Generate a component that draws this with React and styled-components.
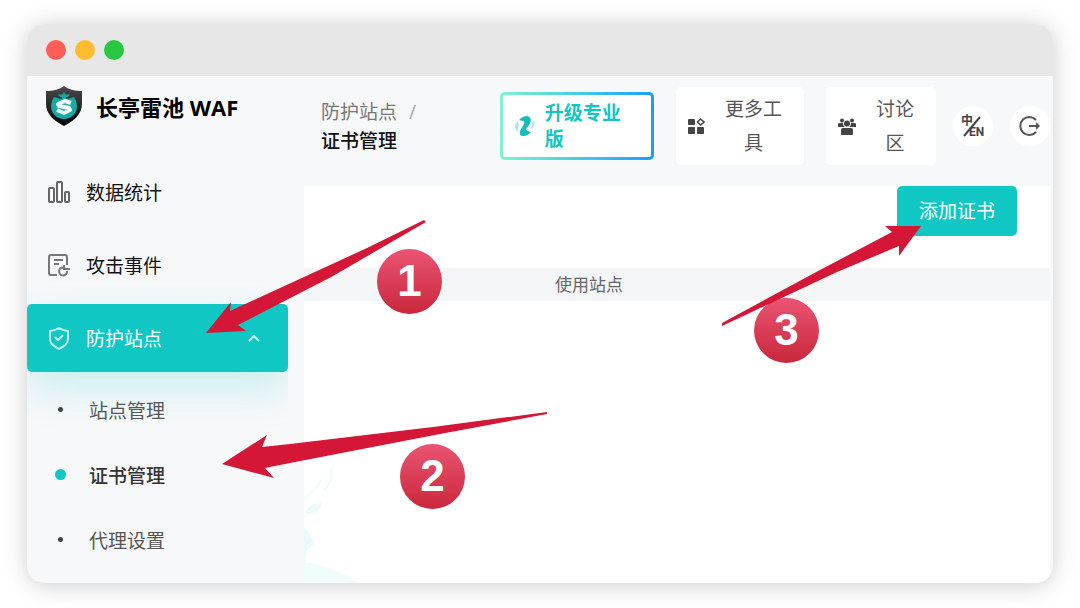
import React from "react";
import styled, { createGlobalStyle } from "styled-components";

const GlobalStyle = createGlobalStyle`
  * {
    box-sizing: border-box;
  }
  body {
    margin: 0;
    background-color: #fff;
    font-family: "Noto Sans", "Noto Sans CJK SC", sans-serif;
    font-size: 19px;
  }
  button {
    font: inherit;
    border: 0;
    cursor: pointer;
  }
`;

const Page = styled.div`
  position: relative;
  display: flex;
  min-height: 100vh;
  padding: 24px 27px 25px;
  overflow: hidden;
`;

const Window = styled.div`
  flex: 1;
  display: flex;
  flex-direction: column;
  border-radius: 18px;
  overflow: hidden;
  background-color: #f7f8fa;
  box-shadow: 0 2px 24px rgb(0, 0, 0, 0.2);
`;

const TitleBar = styled.div`
  display: flex;
  align-items: center;
  gap: 9px;
  height: 52px;
  padding-left: 19px;
  background-color: #e7e7e7;
`;

const Light = styled.span`
  width: 20px;
  height: 20px;
  border-radius: 50%;
  background-color: ${(props) => props.$color};
`;

const Body = styled.div`
  flex: 1;
  display: flex;
  gap: 16px;
`;

const Sidebar = styled.nav`
  flex: none;
  width: 261px;
  overflow: hidden;
`;

const Logo = styled.h1`
  display: flex;
  align-items: center;
  gap: 13px;
  height: 60px;
  margin: 0 0 22px;
  padding-left: 18px;
  color: #000;
  font-family: "Open Sans", "Noto Sans CJK SC", sans-serif;
  font-size: 22px;
  font-weight: 700;
`;

const MenuList = styled.ul`
  display: flex;
  flex-direction: column;
  gap: 5px;
  margin: 0;
  padding: 0;
  list-style: none;
`;

const MenuButton = styled.button`
  display: flex;
  align-items: center;
  gap: 15px;
  width: 100%;
  height: 68px;
  padding: 0 28px 0 20px;
  border-radius: 5px;
  color: ${(props) => (props.$active ? "#fff" : "#111")};
  background-color: ${(props) => (props.$active ? "#11c7c4" : "transparent")};
  box-shadow: ${(props) =>
    props.$active ? "0 16px 40px rgb(15, 198, 194, 0.2)" : "none"};
`;

const MenuLabel = styled.span`
  flex: 1;
  text-align: left;
`;

const SubLink = styled.a`
  display: flex;
  align-items: center;
  gap: ${(props) => (props.$active ? 23 : 26)}px;
  height: 65px;
  padding-left: ${(props) => (props.$active ? 28 : 31)}px;
  color: ${(props) => (props.$active ? "#333" : "#555")};
  font-weight: ${(props) => (props.$active ? 500 : 400)};
  text-decoration: none;

  &::before {
    content: "";
    width: ${(props) => (props.$active ? 11 : 5)}px;
    height: ${(props) => (props.$active ? 11 : 5)}px;
    border-radius: 50%;
    background-color: ${(props) => (props.$active ? "#11c7c4" : "#444")};
  }
`;

const Main = styled.main`
  flex: 1;
  display: flex;
  flex-direction: column;
  min-width: 0;
  padding-right: 3px;
`;

const Header = styled.header`
  display: flex;
  align-items: center;
  justify-content: space-between;
  height: 110px;
  padding-left: 17px;
`;

const Breadcrumb = styled.div`
  width: 110px;
  margin-top: -8px;
  color: #777;
  line-height: 29px;

  b {
    display: block;
    color: #111;
    font-weight: 500;
  }
  span {
    margin-left: 12px;
    color: #aaa;
  }
`;

const Actions = styled.div`
  display: flex;
  align-items: center;
  gap: 17px;
  margin-top: -10px;
`;

const UpgradeButton = styled.button`
  display: flex;
  align-items: center;
  gap: 10px;
  width: 154px;
  height: 68px;
  margin-right: 5px;
  padding: 0 12px;
  border: 3px solid transparent;
  border-radius: 5px;
  color: #11c7c4;
  background: linear-gradient(#fff, #fff) padding-box,
    linear-gradient(90deg, #7df5cd, #1a9dff) border-box;
  font-weight: 700;
  line-height: 26px;
  text-align: left;
`;

const ToolButton = styled.button`
  display: flex;
  align-items: center;
  gap: 18px;
  width: ${(props) => props.$width}px;
  height: 78px;
  margin-right: ${(props) => props.$gap}px;
  padding: 0 20px 0 12px;
  border-radius: 5px;
  color: #555;
  background-color: #fff;
  line-height: 34px;

  span {
    flex: 1;
  }
`;

const RoundButton = styled.button`
  display: flex;
  align-items: center;
  justify-content: center;
  width: 40px;
  height: 40px;
  padding: 0;
  border-radius: 50%;
  color: #444;
  background-color: #fff;
`;

const Card = styled.section`
  position: relative;
  flex: 1;
  display: flex;
  flex-direction: column;
  background-color: #fff;
`;

const AddButton = styled.button`
  align-self: flex-end;
  width: 120px;
  height: 50px;
  margin: 0 33px 32px 0;
  padding: 0 0 3px;
  border-radius: 5px;
  color: #fff;
  background-color: #11c7c4;
`;

const Table = styled.table`
  width: 100%;
  border-collapse: collapse;
  table-layout: fixed;

  th {
    height: 33px;
    padding: 0;
    color: #666;
    background-color: #f4f5f7;
    font-size: 17px;
    font-weight: 400;
    line-height: 24px;
    text-align: left;
  }
  th:first-child {
    width: 251px;
  }
`;

const Backdrop = styled.svg`
  position: absolute;
  left: 0;
  bottom: 0;
`;

const Arrows = styled.svg`
  position: absolute;
  top: 0;
  left: 0;
  pointer-events: none;
`;

const Step = styled.span`
  position: absolute;
  top: ${(props) => props.$top}px;
  left: ${(props) => props.$left}px;
  width: 65px;
  height: 65px;
  border-radius: 50%;
  color: #fff;
  background-image: linear-gradient(#ea5473, #c9283b);
  font-family: "Liberation Sans", sans-serif;
  font-size: 44px;
  font-weight: 700;
  line-height: 63px;
  text-align: center;
`;

const ShieldLogo = () => (
  <svg width="38" height="40" viewBox="0 0 38 40">
    <defs>
      <linearGradient id="shield" x1="0" y1="0" x2="0" y2="1">
        <stop offset="0" stopColor="#4a4a4a" />
        <stop offset="1" stopColor="#050505" />
      </linearGradient>
    </defs>
    <path
      fill="url(#shield)"
      d="M19 0C14 4 7 5 1 5v13c0 10 8 17 18 22 10-5 18-12 18-22V5C31 5 24 4 19 0z"
    />
    <path
      fill="#17a9a4"
      d="M9 11q5 2 10 2t10-2q3 4 3 9a13 13 0 0 1-26 0q0-5 3-9z"
    />
    <path
      fill="#17a9a4"
      d="M13 8l4 1 2-3 2 3 4-1-2 3h-2v3h-4v-3h-2z"
    />
    <path
      fill="none"
      stroke="#eefafa"
      strokeWidth="4"
      strokeLinejoin="round"
      d="M26 17l-6-2-7 3 1 2 10 2 1 2-6 3-7-3"
    />
  </svg>
);

const ChartIcon = () => (
  <svg width="24" height="24" fill="none" stroke="#666" strokeWidth="2">
    <rect x="2" y="8" width="5" height="14" rx="1" />
    <rect x="10" y="2" width="5" height="20" rx="1" />
    <rect x="18" y="12" width="4" height="10" rx="1" />
  </svg>
);

const EventIcon = () => (
  <svg width="24" height="24" fill="none" stroke="#777" strokeWidth="2">
    <path d="M10 22H4a2 2 0 0 1-2-2V4a2 2 0 0 1 2-2h14a2 2 0 0 1 2 2v8M7 7h9M7 11h5" />
    <path d="M18 15a4 4 0 1 0 2 3M17 12v4h6" />
  </svg>
);

const ShieldIcon = () => (
  <svg
    width="24"
    height="24"
    fill="none"
    stroke="#c5f3f2"
    strokeWidth="2"
    strokeLinejoin="round"
  >
    <path d="M12 2C9 4 6 5 3 5v8c0 5 4 7 9 10 5-3 9-5 9-10V5c-3 0-6-1-9-3z" />
    <path d="M8 11l3 3 5-5" />
  </svg>
);

const CaretIcon = () => (
  <svg width="12" height="8" fill="none" stroke="#c5f3f2" strokeWidth="2">
    <path d="M1 7l5-5 5 5" />
  </svg>
);

const UpgradeIcon = () => (
  <svg width="20" height="22" viewBox="0 0 20 22">
    <path
      d="M4 5q4-4 8-4 4 1 4 4 0 3-4 8-2 2 1 3l3 1q-4 5-9 4-3-1-2-5l4-7q1-3-1-3z"
      fill="#18bcbd"
    />
    <path d="M3 6Q0 8 0 13q1 3 4 4-2-4 0-6zM17 7l2-1q2 6-4 9 3-4 2-8z" fill="#a5e8e7" />
  </svg>
);

const AppsIcon = () => (
  <svg width="17" height="16" fill="#444">
    <rect x="0" y="1" width="7" height="6" rx="1" />
    <rect x="0" y="9" width="7" height="7" rx="1" />
    <rect x="9" y="9" width="7" height="7" rx="1" />
    <path
      d="M12.5 1L16 4l-3.500 3-3-3z"
      fill="none"
      stroke="#444"
      strokeWidth="1.5"
    />
  </svg>
);

const PeopleIcon = () => (
  <svg width="18" height="17" fill="#444">
    <circle cx="4" cy="2.5" r="2" />
    <circle cx="14" cy="2.5" r="2" />
    <circle cx="9" cy="5.5" r="3" />
    <path d="M0 9V6q0-1 2-1h3q0 3 2 4zM18 9V6q0-1-2-1h-3q0 3-2 4zM3 16v-4q0-2 2-2h8q2 0 2 2v4q0 1-1 1H4q-1 0-1-1z" />
  </svg>
);

const LanguageIcon = () => (
  <svg
    width="24"
    height="24"
    fill="#444"
    fontFamily="Roboto, 'Noto Sans CJK SC', sans-serif"
    fontWeight="700"
  >
    <text x="0" y="11" fontSize="12">
      中
    </text>
    <path d="M19 3L3 22" stroke="#444" strokeWidth="2" />
    <text x="8" y="22" fontSize="12">
      EN
    </text>
  </svg>
);

const ExitIcon = () => (
  <svg width="22" height="22" fill="none" stroke="#555" strokeWidth="2">
    <path d="M17 5a9 9 0 1 0 0 12M10 11h9" />
    <path d="M17 7l4 4-4 4z" fill="#555" stroke="none" />
  </svg>
);

const App = () => {
  return (
    <Page>
      <GlobalStyle />
      <Window>
        <TitleBar>
          <Light $color="#ff5f57" />
          <Light $color="#febc2e" />
          <Light $color="#28c840" />
        </TitleBar>
        <Body>
          <Sidebar>
            <Logo>
              <ShieldLogo />
              长亭雷池 WAF
            </Logo>
            <MenuList>
              <li>
                <MenuButton>
                  <ChartIcon />
                  <MenuLabel>数据统计</MenuLabel>
                </MenuButton>
              </li>
              <li>
                <MenuButton>
                  <EventIcon />
                  <MenuLabel>攻击事件</MenuLabel>
                </MenuButton>
              </li>
              <li>
                <MenuButton $active aria-expanded="true">
                  <ShieldIcon />
                  <MenuLabel>防护站点</MenuLabel>
                  <CaretIcon />
                </MenuButton>
              </li>
              <li>
                <SubLink href="#sites">站点管理</SubLink>
                <SubLink href="#certs" $active>
                  证书管理
                </SubLink>
                <SubLink href="#proxy">代理设置</SubLink>
              </li>
            </MenuList>
          </Sidebar>
          <Main>
            <Header>
              <Breadcrumb>
                防护站点<span>/</span>
                <b>证书管理</b>
              </Breadcrumb>
              <Actions>
                <UpgradeButton>
                  <UpgradeIcon />
                  <span>升级专业版</span>
                </UpgradeButton>
                <ToolButton $width={128} $gap={5}>
                  <AppsIcon />
                  <span>更多工具</span>
                </ToolButton>
                <ToolButton $width={110} $gap={0}>
                  <PeopleIcon />
                  <span>讨论区</span>
                </ToolButton>
                <RoundButton aria-label="中/EN">
                  <LanguageIcon />
                </RoundButton>
                <RoundButton aria-label="退出">
                  <ExitIcon />
                </RoundButton>
              </Actions>
            </Header>
            <Card>
              <AddButton>添加证书</AddButton>
              <Table>
                <thead>
                  <tr>
                    <th />
                    <th>使用站点</th>
                  </tr>
                </thead>
              </Table>
              <Backdrop width="60" height="115" fill="#e9fafa">
                <path
                  d="M0 31Q10 24 17 12M20 22Q30 13 27 2"
                  fill="none"
                  stroke="#f0fafa"
                  strokeWidth="2"
                />
                <path d="M2 45Q4 35 18 35Q15 48 2 45z" />
                <path d="M0 59l3 3 8 14-8 5-3 19z" />
                <path d="M0 94Q30 98 54 115H0z" fill="#f0fdfb" />
              </Backdrop>
            </Card>
          </Main>
        </Body>
      </Window>
      <Step $left={377} $top={249}>1</Step>
      <Step $left={400} $top={444}>2</Step>
      <Step $left={754} $top={298}>3</Step>
      <Arrows width="1080" height="608" fill="#d41736">
        <path d="M206 333L231 302 230 311 304 277 367 248 424 220 426 222 333 276 238 325 246 331z" />
        <path d="M222 464L267 435 262 447 290 444 433 427 547 412 547 414 440 434 290 463 265 468 274 478z" />
        <path d="M921 226L885 226 892 232 820 270 722 323 722 326 837 272 899 246 899 256z" />
      </Arrows>
    </Page>
  );
};

export default App;
